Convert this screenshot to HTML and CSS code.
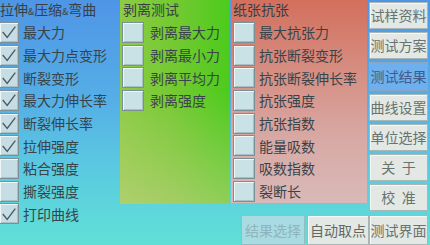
FILE: index.html
```html
<!DOCTYPE html>
<html lang="zh">
<head>
<meta charset="utf-8">
<link rel="stylesheet" href="styles.css">
</head>
<body>
<div class="screen">
  <section class="panel left">
    <div class="title">拉伸<span class="amp">&amp;</span>压缩<span class="amp">&amp;</span>弯曲</div>
    <div class="row"><span class="box checked"><svg viewBox="0 0 20 20"><path d="M3 10 L8 16 L17 4"/></svg></span><span class="lbl">最大力</span></div>
    <div class="row"><span class="box checked"><svg viewBox="0 0 20 20"><path d="M3 10 L8 16 L17 4"/></svg></span><span class="lbl">最大力点变形</span></div>
    <div class="row"><span class="box checked"><svg viewBox="0 0 20 20"><path d="M3 10 L8 16 L17 4"/></svg></span><span class="lbl">断裂变形</span></div>
    <div class="row"><span class="box checked"><svg viewBox="0 0 20 20"><path d="M3 10 L8 16 L17 4"/></svg></span><span class="lbl">最大力伸长率</span></div>
    <div class="row"><span class="box checked"><svg viewBox="0 0 20 20"><path d="M3 10 L8 16 L17 4"/></svg></span><span class="lbl">断裂伸长率</span></div>
    <div class="row"><span class="box checked"><svg viewBox="0 0 20 20"><path d="M3 10 L8 16 L17 4"/></svg></span><span class="lbl">拉伸强度</span></div>
    <div class="row"><span class="box"></span><span class="lbl">粘合强度</span></div>
    <div class="row"><span class="box"></span><span class="lbl">撕裂强度</span></div>
    <div class="row"><span class="box checked"><svg viewBox="0 0 20 20"><path d="M3 10 L8 16 L17 4"/></svg></span><span class="lbl">打印曲线</span></div>
  </section>

  <div class="middle">
    <div class="panels">
      <section class="panel green">
        <div class="title">剥离测试</div>
        <div class="row"><span class="box"></span><span class="lbl">剥离最大力</span></div>
        <div class="row"><span class="box"></span><span class="lbl">剥离最小力</span></div>
        <div class="row"><span class="box"></span><span class="lbl">剥离平均力</span></div>
        <div class="row"><span class="box"></span><span class="lbl">剥离强度</span></div>
      </section>
      <section class="panel red">
        <div class="title">纸张抗张</div>
        <div class="row"><span class="box"></span><span class="lbl">最大抗张力</span></div>
        <div class="row"><span class="box"></span><span class="lbl">抗张断裂变形</span></div>
        <div class="row"><span class="box"></span><span class="lbl">抗张断裂伸长率</span></div>
        <div class="row"><span class="box"></span><span class="lbl">抗张强度</span></div>
        <div class="row"><span class="box"></span><span class="lbl">抗张指数</span></div>
        <div class="row"><span class="box"></span><span class="lbl">能量吸数</span></div>
        <div class="row"><span class="box"></span><span class="lbl">吸数指数</span></div>
        <div class="row"><span class="box"></span><span class="lbl">裂断长</span></div>
      </section>
    </div>
    <div class="bottom">
      <button class="btn disabled w64">结果选择</button>
      <button class="btn w62">自动取点</button>
    </div>
  </div>

  <nav class="side">
    <button class="btn">试样资料</button>
    <button class="btn">测试方案</button>
    <button class="btn active">测试结果</button>
    <button class="btn">曲线设置</button>
    <button class="btn">单位选择</button>
    <button class="btn">关&nbsp;&nbsp;于</button>
    <button class="btn">校&nbsp;&nbsp;准</button>
    <button class="btn last">测试界面</button>
  </nav>
</div>
</body>
</html>
```

FILE: styles.css
```css
* { box-sizing: border-box; }
html, body { margin: 0; padding: 0; }
body {
  width: 430px;
  height: 245px;
  overflow: hidden;
  font-family: "Noto Sans CJK SC", "Noto Sans", sans-serif;
  font-size: 14px;
  color: #38444a;
}
.screen {
  width: 430px;
  height: 245px;
  display: flex;
  background: linear-gradient(to bottom, #4f95e6 0%, #55aee6 40%, #5bcbe0 70%, #60e0d6 100%);
}
.panel { display: flex; flex-direction: column; }
.title {
  height: 21px;
  line-height: 19px;
  padding-left: 1px;
  color: #3a3f44;
  white-space: nowrap;
}
.amp { font-size: 9px; }
.row {
  height: 22.7px;
  display: flex;
  align-items: center;
  gap: 5px;
  white-space: nowrap;
}
.box {
  flex: none;
  width: 21px;
  height: 21px;
  border: 1px solid #7c8e96;
  box-shadow: inset 1px 1px 0 #eef6f6, inset -1px -1px 0 #a8c0c4;
  background: #c8e2e6;
  display: flex;
  align-items: center;
  justify-content: center;
}
.box svg { width: 18px; height: 18px; }
.box svg path { fill: none; stroke: #4a5a60; stroke-width: 1.5; }
.lbl { line-height: 18px; }

.left { width: 120px; }
.left .title { padding-left: 0; }
.left .box { width: 20px; margin-left: -1px; background: #c6dde6; }
.left .row { gap: 4px; }

.middle {
  width: 249px;
  display: flex;
  flex-direction: column;
}
.panels { display: flex; gap: 1px; height: 204px; }
.green {
  width: 110px;
  height: 204px;
  padding-left: 2px;
  background:
    linear-gradient(to bottom, rgba(220,215,150,0) 45%, rgba(210,210,150,0.5) 100%),
    linear-gradient(to right, #8ccc44 0%, #74c932 50%, #4ccb1c 100%);
}
.green .row { gap: 6px; }
.green .box { width: 22px; }
.red {
  width: 136px;
  height: 203px;
  padding-left: 1px;
  background: linear-gradient(to bottom, #d36f5d 0%, #d68e82 35%, #d8aaa6 70%, #d9b9b8 100%);
}
.red .row { gap: 4px; }
.red .box { width: 22px; margin-left: 1px; }

.bottom {
  margin-top: auto;
  height: 30px;
  display: flex;
  justify-content: flex-end;
  gap: 2px;
}

.side {
  width: 61px;
  padding: 2px 2px 0 0;
  display: flex;
  flex-direction: column;
  gap: 3px;
  align-items: flex-end;
}

.btn {
  font-family: "Noto Sans CJK SC", "Noto Sans", sans-serif;
  font-size: 14px;
  color: #68726f;
  background: #e3e8e4;
  border: 1px solid #a9b6b6;
  box-shadow: inset 1px 1px 0 #f6f8f6;
  padding: 0;
  margin: 0;
  height: 27px;
  width: 59px;
  line-height: 25px;
  text-align: center;
  white-space: nowrap;
  flex: none;
}
.side .active {
  background: #6eb0ee;
  color: #3f5c8c;
  border-color: #8aa6c0;
  box-shadow: none;
  height: 29px;
  line-height: 27px;
}
.side .last { margin-top: auto; height: 30px; line-height: 28px; }
.bottom .btn { height: 30px; line-height: 28px; }
.w64 { width: 64px !important; }
.w62 { width: 62px !important; }
.bottom .w62 { color: #5f6a66; }
.disabled {
  background: #a9dbe2;
  color: #8fb4bc;
  border-color: #94bcc2;
  box-shadow: none;
}
```
